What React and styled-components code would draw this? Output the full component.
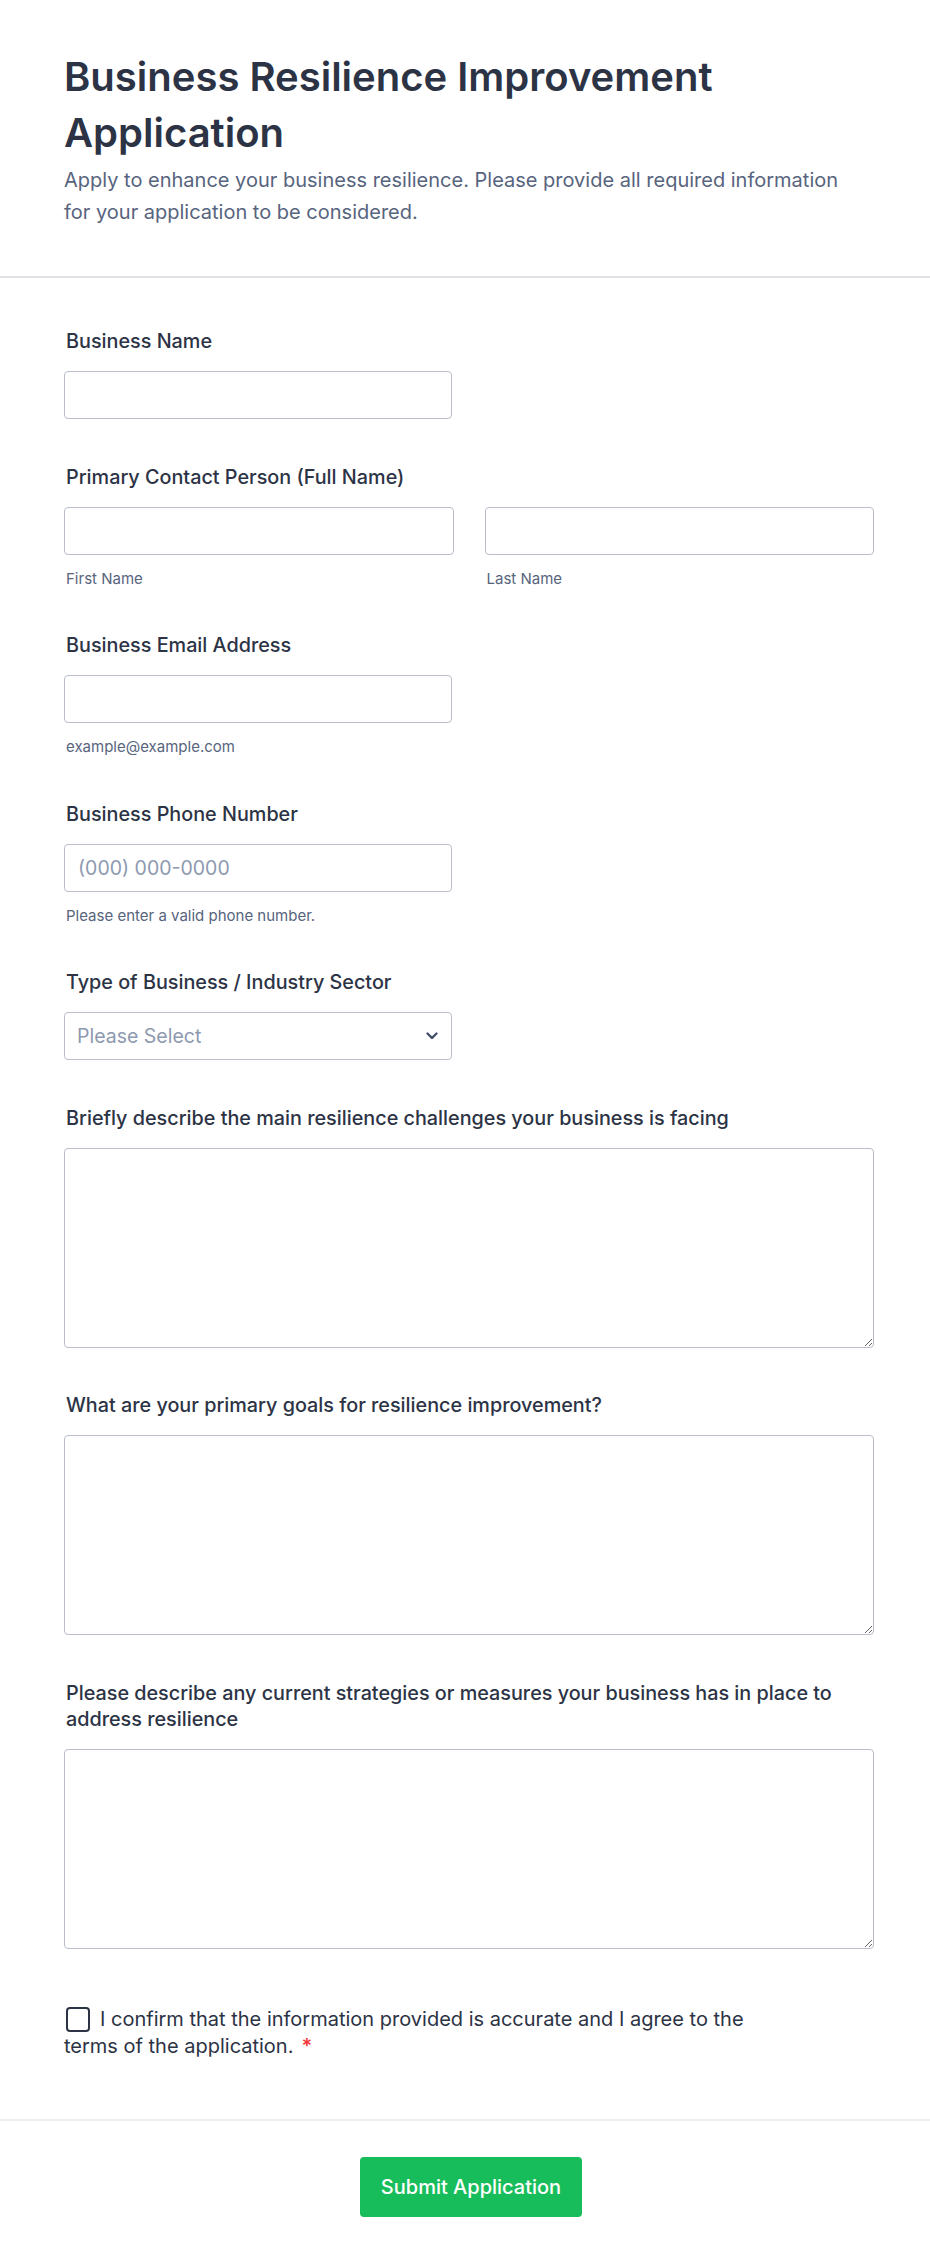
import React from 'react';
import styled, { createGlobalStyle } from 'styled-components';

const GlobalStyle = createGlobalStyle`
  html, body {
    margin: 0;
    padding: 0;
    background: #ffffff;
  }
  body {
    font-family: Inter, "Noto Sans", Arial, sans-serif;
    color: #2c3345;
  }
  * {
    box-sizing: border-box;
  }
`;

const Page = styled.div`
  width: 930px;
  background: #ffffff;
`;

const Header = styled.header`
  padding: 49px 56px 48px 64px;
  border-bottom: 2px solid #e0e1e6;
`;

const Title = styled.h1`
  margin: 0 0 3px;
  font-size: 40px;
  line-height: 56px;
  font-weight: 600;
  color: #2c3345;
`;

const Subtitle = styled.p`
  margin: 0;
  font-size: 20px;
  line-height: 32px;
  color: #57647e;
  max-width: 790px;
`;

const Body = styled.div`
  padding: 50px 56px 59px 64px;
  display: flex;
  flex-direction: column;
  gap: 44.5px;
`;

const Field = styled.div`
  display: flex;
  flex-direction: column;
`;

const Label = styled.label`
  display: block;
  padding-left: 2px;
  margin-bottom: 17px;
  font-size: 19.8px;
  line-height: 26px;
  font-weight: 500;
  color: #2c3345;
`;

const Input = styled.input`
  width: ${(p) => (p.$full ? '100%' : '388px')};
  height: 48px;
  padding: 0 13px;
  border: 1px solid #b8bdc9;
  border-radius: 4px;
  background: #ffffff;
  font-family: inherit;
  font-size: 19.5px;
  color: #2c3345;
  outline: none;

  &::placeholder {
    color: #8d99b0;
  }
`;

const NameRow = styled.div`
  display: grid;
  grid-template-columns: 1fr 1fr;
  column-gap: 31px;
`;

const SubLabel = styled.span`
  display: block;
  margin-top: 15px;
  padding-left: 2px;
  font-size: 15px;
  line-height: 18px;
  color: #57647e;
`;

const SelectWrap = styled.div`
  position: relative;
  width: 388px;
`;

const Select = styled.select`
  width: 100%;
  height: 48px;
  padding: 0 40px 0 12px;
  border: 1px solid #b8bdc9;
  border-radius: 4px;
  background: #ffffff;
  font-family: inherit;
  font-size: 19.5px;
  color: #8d99b0;
  appearance: none;
  outline: none;
`;

const Chevron = styled.svg`
  position: absolute;
  right: 14px;
  top: 50%;
  transform: translateY(-50%);
  pointer-events: none;
`;

const TextArea = styled.textarea`
  width: 100%;
  height: 200px;
  padding: 12px 14px;
  border: 1px solid #b8bdc9;
  border-radius: 4px;
  background: #ffffff;
  font-family: inherit;
  font-size: 19.5px;
  color: #2c3345;
  resize: vertical;
  outline: none;
  display: block;
`;

const Consent = styled.label`
  display: block;
  max-width: 700px;
  margin-top: 13px;
  font-size: 20px;
  line-height: 27px;
  color: #2c3345;
`;

const Box = styled.input`
  appearance: none;
  width: 24px;
  height: 25px;
  margin: 0 10px 0 2px;
  border: 2px solid #2c3345;
  border-radius: 4px;
  background: #ffffff;
  vertical-align: -6px;
`;

const Required = styled.span`
  color: #f23a3c;
  margin-left: 8px;
  font-weight: 600;
`;

const Footer = styled.footer`
  border-top: 2px solid #ecedf3;
  padding: 36px 52px 50px 64px;
  display: flex;
  justify-content: center;
`;

const SubmitButton = styled.button`
  width: 222px;
  height: 60px;
  border: none;
  border-radius: 4px;
  background: #18bd5b;
  color: #ffffff;
  font-family: inherit;
  font-size: 20px;
  font-weight: 500;
  cursor: pointer;
`;

const App = () => {
  return (
    <Page>
      <GlobalStyle />
      <Header>
        <Title>Business Resilience Improvement Application</Title>
        <Subtitle>
          Apply to enhance your business resilience. Please provide all required information for your
          application to be considered.
        </Subtitle>
      </Header>

      <Body>
        <Field>
          <Label>Business Name</Label>
          <Input type="text" />
        </Field>

        <Field>
          <Label>Primary Contact Person (Full Name)</Label>
          <NameRow>
            <div>
              <Input type="text" $full />
              <SubLabel>First Name</SubLabel>
            </div>
            <div>
              <Input type="text" $full />
              <SubLabel>Last Name</SubLabel>
            </div>
          </NameRow>
        </Field>

        <Field>
          <Label>Business Email Address</Label>
          <Input type="email" />
          <SubLabel>example@example.com</SubLabel>
        </Field>

        <Field>
          <Label>Business Phone Number</Label>
          <Input type="tel" placeholder="(000) 000-0000" />
          <SubLabel>Please enter a valid phone number.</SubLabel>
        </Field>

        <Field>
          <Label>Type of Business / Industry Sector</Label>
          <SelectWrap>
            <Select defaultValue="">
              <option value="">Please Select</option>
            </Select>
            <Chevron width="12" height="8" viewBox="0 0 12 8" fill="none">
              <path d="M1.5 1.5L6 6l4.5-4.5" stroke="#3e4a63" strokeWidth="2.2" strokeLinecap="round" strokeLinejoin="round" />
            </Chevron>
          </SelectWrap>
        </Field>

        <Field>
          <Label>Briefly describe the main resilience challenges your business is facing</Label>
          <TextArea />
        </Field>

        <Field>
          <Label>What are your primary goals for resilience improvement?</Label>
          <TextArea />
        </Field>

        <Field>
          <Label>Please describe any current strategies or measures your business has in place to address resilience</Label>
          <TextArea />
        </Field>

        <Consent>
          <Box type="checkbox" />
          I confirm that the information provided is accurate and I agree to the terms of the application.
          <Required>*</Required>
        </Consent>
      </Body>

      <Footer>
        <SubmitButton type="submit">Submit Application</SubmitButton>
      </Footer>
    </Page>
  );
};

export default App;
